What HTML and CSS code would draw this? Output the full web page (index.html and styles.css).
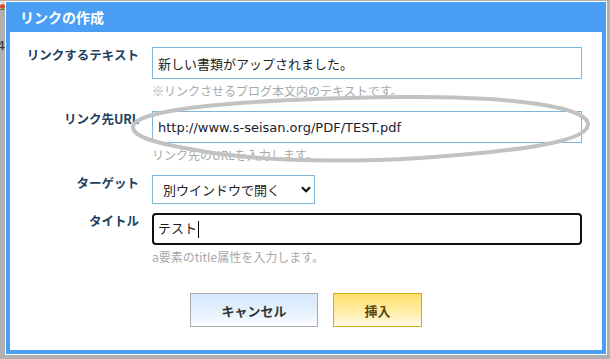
FILE: index.html
```html
<!DOCTYPE html>
<html lang="ja">

<head>
  <meta charset="UTF-8">
  <meta name="viewport" content="width=device-width, initial-scale=1.0">
  <title>リンクの作成</title>
  <link rel="stylesheet" href="styles.css">
</head>

<body>
  <div class="page">
    <div class="backdrop">
      <div class="backdrop-icon">
        <span class="dot-red"></span>
        <span class="bar-green"></span>
      </div>
      <div class="backdrop-text">4</div>
    </div>

    <div class="dialog">
      <div class="dialog-title">リンクの作成</div>

      <div class="dialog-body">
        <div class="row">
          <label class="row-label" for="link-text">リンクするテキスト</label>
          <div class="row-field">
            <input class="text-input" type="text" id="link-text" value="新しい書類がアップされました。">
            <div class="hint">※リンクさせるブログ本文内のテキストです。</div>
          </div>
        </div>

        <div class="row">
          <label class="row-label" for="link-url">リンク先URL</label>
          <div class="row-field">
            <input class="text-input url" type="text" id="link-url" value="http://www.s-seisan.org/PDF/TEST.pdf">
            <div class="hint">リンク先のURLを入力します。</div>
          </div>
        </div>

        <div class="row row-select">
          <label class="row-label" for="link-target">ターゲット</label>
          <div class="row-field">
            <div class="select-wrap">
              <select class="select" id="link-target">
                <option>別ウインドウで開く</option>
                <option>同じウインドウで開く</option>
              </select>
              <svg class="chevron" width="10" height="7" viewBox="0 0 10 7">
                <path d="M1 1.2 L5 5.2 L9 1.2" fill="none" stroke="#111" stroke-width="2.2" />
              </svg>
            </div>
          </div>
        </div>

        <div class="row">
          <label class="row-label">タイトル</label>
          <div class="row-field">
            <div class="text-input focused">テスト<span class="caret"></span></div>
            <div class="hint">a要素のtitle属性を入力します。</div>
          </div>
        </div>

        <div class="actions">
          <button class="btn btn-cancel">キャンセル</button>
          <button class="btn btn-insert">挿入</button>
        </div>
      </div>
    </div>
  </div>

  <!-- hand drawn annotation over the URL field -->
  <svg class="annotation" width="610" height="359" viewBox="0 0 610 359">
    <path d="M133 128 C130 108 250 99 400 97 C520 96 590 108 588 125 C586 142 520 151 420 158 C320 164 240 159 190 149 C150 142 134 136 133 128 Z"
      fill="none" stroke="#c2c2c2" stroke-width="4" />
  </svg>
</body>

</html>
```

FILE: styles.css
```css
body {
  margin: 0;
  background: #b0b0b0;
  font-family: "DejaVu Sans", "Noto Sans CJK JP", sans-serif;
  font-size: 13px;
  color: #222;
}

.page {
  display: flex;
  align-items: flex-start;
  padding-top: 1px;
  height: 358px;
}

.backdrop {
  width: 5px;
  flex-shrink: 0;
  overflow: hidden;
}

.backdrop-icon {
  height: 10px;
  margin-top: -1px;
  background: #e6e3dd;
  overflow: hidden;
}

.dot-red {
  display: block;
  width: 5px;
  height: 5px;
  margin-top: 4px;
  border-radius: 50%;
  background: #d84a30;
}

.bar-green {
  display: block;
  width: 5px;
  height: 2px;
  background: #3f9a3a;
}

.backdrop-text {
  margin-top: 28px;
  padding-left: 0;
  font-size: 13px;
  line-height: 16px;
  color: #333;
  text-indent: -3px;
}

.dialog {
  width: 602px;
  height: 354px;
  flex-shrink: 0;
  border: 1px solid #fff;
  background: #4a9ff5;
  padding: 0 4px 4px;
  box-sizing: border-box;
  display: flex;
  flex-direction: column;
}

.dialog-title {
  height: 30px;
  line-height: 30px;
  padding-left: 10px;
  color: #fff;
  font-weight: bold;
  font-size: 14px;
  font-family: "Noto Sans CJK JP", sans-serif;
}

.dialog-body {
  flex: 1;
  background: #fff;
  padding: 15px 20px 0 0;
}

.row {
  display: grid;
  grid-template-columns: 129px 1fr;
  column-gap: 13px;
  margin-bottom: 11px;
}

.row-select {
  margin-bottom: 9px;
}

.row-label {
  text-align: right;
  font-family: "Noto Sans CJK JP", sans-serif;
  font-weight: bold;
  font-size: 12.5px;
  line-height: 16px;
  color: #213f5e;
}

.text-input {
  display: block;
  width: 100%;
  height: 32px;
  box-sizing: border-box;
  border: 1px solid #80b6da;
  padding: 0 5px;
  font-family: "DejaVu Sans", "Noto Sans CJK JP", sans-serif;
  font-size: 13px;
  color: #1e1e1e;
  outline: none;
}

.text-input.url {
  color: #1b1a2e;
}

.text-input.focused {
  border: 2px solid #111;
  border-radius: 4px;
  padding: 0 4px;
  line-height: 28px;
  display: flex;
  align-items: center;
}

.caret {
  display: inline-block;
  width: 1px;
  height: 17px;
  margin-left: 1px;
  background: #000;
}

.hint {
  margin-top: 3px;
  line-height: 18px;
  font-size: 12px;
  color: #a9a9a9;
  font-family: "Noto Sans CJK JP", sans-serif;
}

.select-wrap {
  position: relative;
  width: 163px;
}

.select {
  display: block;
  width: 100%;
  height: 29px;
  appearance: none;
  -webkit-appearance: none;
  border: 1px solid #80b6da;
  border-radius: 0;
  background: #fff;
  padding: 0 0 0 10px;
  font-family: "Noto Sans CJK JP", sans-serif;
  font-size: 13px;
  color: #222;
}

.chevron {
  position: absolute;
  left: 149px;
  top: 11px;
  pointer-events: none;
}

.actions {
  display: flex;
  justify-content: center;
  gap: 15px;
  margin-top: 27px;
  padding-left: 20px;
}

.btn {
  height: 34px;
  font-family: "Noto Sans CJK JP", sans-serif;
  font-weight: bold;
  font-size: 13px;
  cursor: pointer;
}

.btn-cancel {
  width: 128px;
  border: 1px solid #acacac;
  background: linear-gradient(to bottom, #d4e8fc, #eaf4fe 70%, #fff);
  color: #333;
}

.btn-insert {
  width: 89px;
  border: 1px solid #d5aa1a;
  background: linear-gradient(to bottom, #ffdf6a, #fff1b8 70%, #fffbe6);
  color: #5c4a12;
}

.annotation {
  position: absolute;
  left: 0;
  top: 0;
  pointer-events: none;
}
```
